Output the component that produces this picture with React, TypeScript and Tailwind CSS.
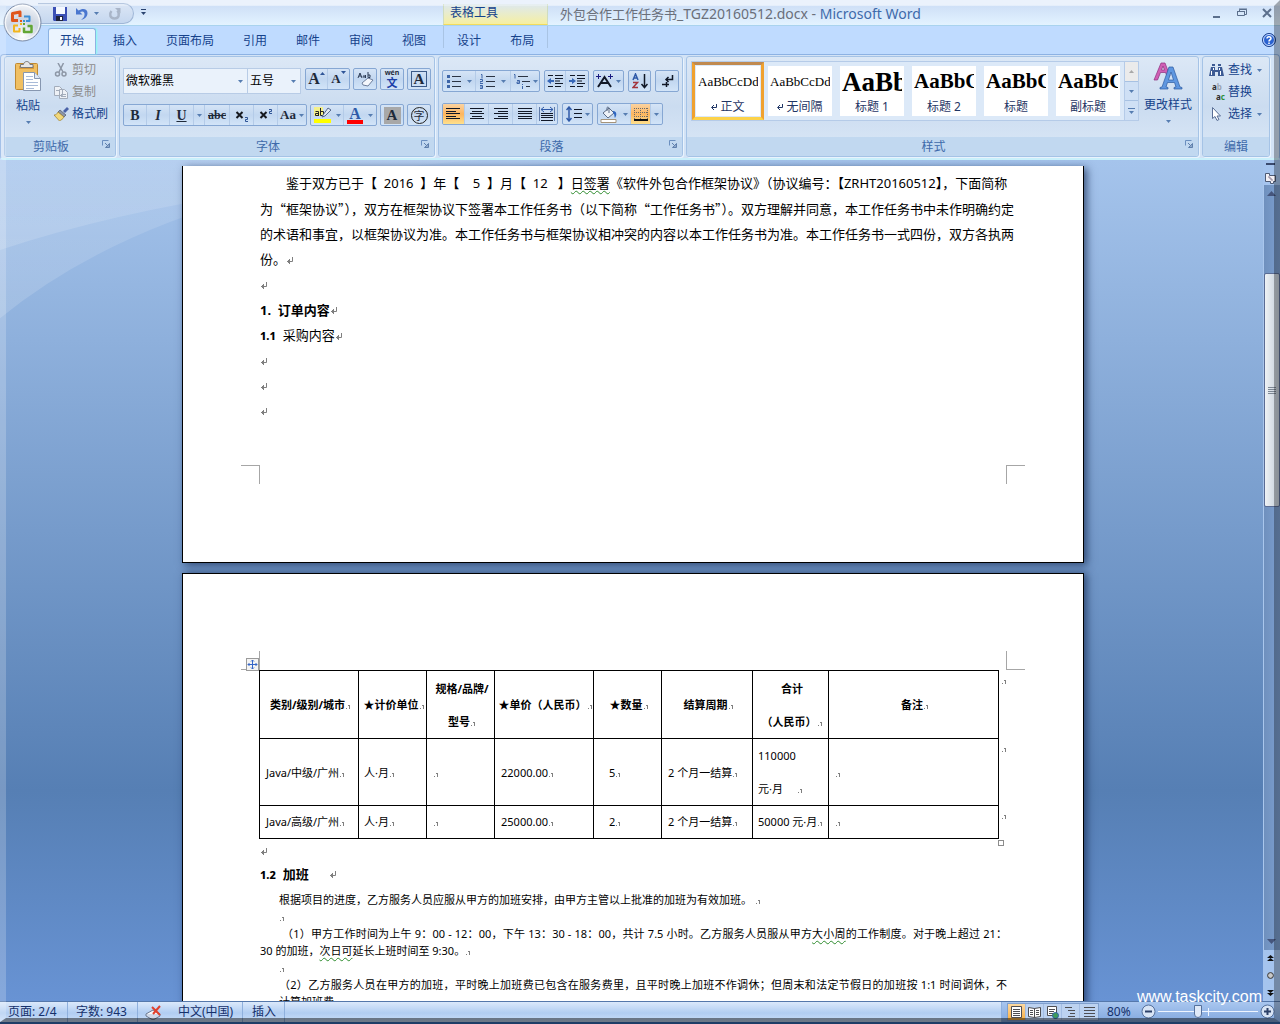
import type { ReactNode } from "react";
import clsx from "clsx";

type Kids = { children?: ReactNode };

const Caret = () => (
  <svg width="5" height="3" viewBox="0 0 5 3" className="shrink-0" aria-hidden="true">
    <path d="M0 0h5L2.500 3z" fill="#567db1" />
  </svg>
);

// paragraph mark used at the end of every body paragraph
const ParaMark = () => (
  <svg width="8" height="8" viewBox="0 0 8 8" className="inline-block" aria-hidden="true">
    <path d="M6.500 0v4.500H1M3.500 2v5M2.500 3v3" fill="none" stroke="#7f7f7f" />
  </svg>
);

// the smaller mark that is shown in table cells and small text
const CellMark = () => (
  <svg width="6" height="5" viewBox="0 0 6 5" className="inline-block align-baseline" aria-hidden="true">
    <path d="M1 4h1v1H1zM3 1h2v4H4V2H3z" fill="#7f7f7f" />
  </svg>
);

const Launcher = ({ label }: { label: string }) => (
  <button aria-label={label} className="absolute right-[4px] top-[3px]">
    <svg width="9" height="9" viewBox="0 0 9 9">
      <path d="M.5 5.500V.5h6" fill="none" stroke="#6b8fbf" />
      <path d="M3 3l3 3M7.500 3.500v4h-4z" fill="#8fa9cc" stroke="#5f80ad" />
    </svg>
  </button>
);

const Group = ({ title, className, launcher = true, children }: Kids & { title: string; className: string; launcher?: boolean }) => (
  <section
    aria-label={title}
    className={clsx(
      "flex h-[101px] flex-col rounded-[3px] border border-[#a5c3e6] bg-gradient-to-b from-[#dce8f6] via-[#cbdcf0] to-[#dbe8f7] shadow-[1px_1px_0_#e9f3fd]",
      className,
    )}
  >
    <div className="min-h-0 flex-1">{children}</div>
    <div className={clsx("relative h-[19px] rounded-b-[2px] bg-[#c1d8f0] text-center leading-[19px] text-[#3e6aaa]", launcher && "pr-[18px]")}>
      {title}
      {launcher && <Launcher label={`${title}选项`} />}
    </div>
  </section>
);

const Bar = ({ children }: Kids) => (
  <div className="flex h-[22px] shrink-0 divide-x divide-[#b4cbe8] overflow-hidden rounded-[2px] border border-[#86a7d3] bg-gradient-to-b from-[#d5e4f6] via-[#c2d7f0] to-[#d2e4f8]">
    {children}
  </div>
);

const Btn = ({ label, className = "w-[22px]", on, children }: Kids & { label: string; className?: string; on?: boolean }) => (
  <button
    aria-label={label}
    className={clsx(
      "flex h-full items-center justify-center gap-[3px] text-[#1f2a3a]",
      on && "bg-gradient-to-b from-[#fbd3a0] via-[#fdb55e] to-[#fee08c]",
      className,
    )}
  >
    {children}
  </button>
);

const Lines = ({ d }: { d: string }) => (
  <svg width="16" height="14" viewBox="0 0 16 14">
    <path d={d} stroke="#111827" fill="none" />
  </svg>
);

const OfficeButton = () => (
  <button aria-label="Office 按钮" className="absolute left-[3px] top-[3px] z-10">
    <svg width="39" height="39" viewBox="0 0 39 39">
      <defs>
        <radialGradient id="orb" cx=".5" cy=".85" r=".9">
          <stop offset="0" stopColor="#fff" />
          <stop offset=".5" stopColor="#ccd5e2" />
          <stop offset=".75" stopColor="#e2e7ef" />
          <stop offset="1" stopColor="#fbfcfe" />
        </radialGradient>
      </defs>
      <circle cx="19.500" cy="19.500" r="18.500" fill="url(#orb)" stroke="#7d8da8" />
      <circle cx="19.500" cy="19.500" r="17" fill="none" stroke="#fff" opacity=".8" />
      <g fill="none" strokeWidth="2.500" strokeLinejoin="round">
        <path d="M15 17.500H9.500v-7l7.500-1.500v5" stroke="#e0561c" strokeWidth="3" />
        <path d="M21 13.500h5.500V18H23" stroke="#3d8fd6" strokeWidth="2" />
        <path d="M15 22.500h-4v6h5.500V25" stroke="#f2b51d" strokeWidth="2" />
        <path d="M21 24.500v4.500h7.500v-6h-4" stroke="#62a635" />
      </g>
      <path d="M17 17h2v2h-2z" fill="#e0561c" />
      <path d="M20 17h2v2h-2z" fill="#3d8fd6" />
      <path d="M17 20h2v2h-2z" fill="#f2b51d" />
      <path d="M20 20h2v2h-2z" fill="#62a635" />
    </svg>
  </button>
);

const TitleBar = () => (
  <div className="flex h-[26px] border-b border-[#a9d3ee] bg-gradient-to-b from-[#e4eefb] from-20% via-[#cfe0f7] via-25% to-[#e3f3ff]">
    <div className="flex w-[443px] shrink-0 pl-[38px] pt-[3px]">
      <div className="flex h-[21px] w-[96px] items-center rounded-r-full border border-l-0 border-[#9fb6d6] bg-gradient-to-b from-[#dbe6f5] to-[#c5d7ef] pl-[15px]">
        <button aria-label="保存">
          <svg width="14" height="14" viewBox="0 0 14 14">
            <path d="M0 0h14v14H1L0 13z" fill="#3b50b5" />
            <path d="M3 0h9v7H3z" fill="#f4f8ff" />
            <path d="M3 9h7v5H3z" fill="#20243c" />
            <path d="M7 10h2v3H7z" fill="#fff" />
          </svg>
        </button>
        <button aria-label="撤消" className="ml-[8px]">
          <svg width="13" height="14" viewBox="0 0 13 14">
            <path d="M1 1v6.500h6.500L5 5c3-1.500 5 0 4.500 3-.2 2-1.500 3.500-3.500 5 4-1 6.500-3.500 6.500-7C12.500 2 8 .5 3.500 3.500z" fill="#4a77cf" />
          </svg>
        </button>
        <button aria-label="撤消列表" className="ml-[6px]"><Caret /></button>
        <button aria-label="恢复" className="ml-[9px]">
          <svg width="13" height="14" viewBox="0 0 13 14">
            <path d="M3.500 4C1 7 2 11.500 6.500 11.500S12 7 9.500 3.500" fill="none" stroke="#a9b5c8" strokeWidth="2.500" />
            <path d="M7 1h5.500v5.500z" fill="#a9b5c8" />
          </svg>
        </button>
      </div>
      <button aria-label="自定义快速访问工具栏" className="ml-[7px] flex h-[18px] flex-col items-center justify-center gap-[2px]">
        <span className="h-px w-[5px] bg-[#2b4470]" />
        <svg width="5" height="3" viewBox="0 0 5 3"><path d="M0 0h5L2.500 3z" fill="#2b4470" /></svg>
      </button>
    </div>
    <div className="mt-1 w-[105px] shrink-0 border-x border-b border-[#cfdcc0] border-b-[#f3dc5c] bg-gradient-to-b from-[#dde8ee] to-[#f6efa0] pl-[6px] leading-[18px] text-[#15428b]">
      表格工具
    </div>
    <h1 className="min-w-0 flex-1 truncate pl-[12px] pt-[2px] text-[13px] leading-[23px] text-[#6a6f7a]">
      外包合作工作任务书<span className="text-[14px]">_TGZ20160512.docx - <span className="text-[#3e6aaa]">Microsoft Word</span></span>
    </h1>
    <div className="flex shrink-0 items-center gap-[15px] pr-[8px] text-[#5b6f8c]">
      <button aria-label="最小化">
        <svg width="10" height="10" viewBox="0 0 10 10"><path d="M1 8h7v2H1z" fill="currentColor" /></svg>
      </button>
      <button aria-label="还原">
        <svg width="10" height="10" viewBox="0 0 10 10" fill="none" stroke="currentColor">
          <path d="M2.500 3V1.500h7v5H8M.5 3.500h7v4h-7zM2 1h8M0 3.500h8" />
        </svg>
      </button>
      <button aria-label="关闭">
        <svg width="10" height="10" viewBox="0 0 10 10"><path d="M1 1l8 8M9 1L1 9" stroke="currentColor" strokeWidth="2" /></svg>
      </button>
    </div>
  </div>
);

const tabs = ["开始", "插入", "页面布局", "引用", "邮件", "审阅", "视图"];

const TabRow = () => (
  <nav className="flex h-[28px] items-start bg-[#bfdbff] pl-[48px] text-[#15428b]">
    <div className="flex gap-[5px]">
      {tabs.map((tab, i) => (
        <button
          key={tab}
          className={clsx(
            "h-[26px]",
            i === 0 ? "mt-[2px] rounded-t-[3px] border-x border-t border-[#8db2e3] bg-[#ebf4fe] px-[11px] pb-[2px] shadow-[1px_0_2px_#8fe]" : "px-[12px] pt-[4px]",
          )}
        >
          {tab}
        </button>
      ))}
    </div>
    <div className="ml-[5px] flex h-[22px] w-[105px] gap-[5px] border-x border-[#a9c4e4] pl-px">
      <button className="h-[26px] px-[12px] pt-[4px]">设计</button>
      <button className="h-[26px] px-[12px] pt-[4px]">布局</button>
    </div>
    <button aria-label="帮助" className="ml-auto mr-[4px] mt-[7px]">
      <svg width="14" height="14" viewBox="0 0 14 14">
        <circle cx="7" cy="7" r="6.500" fill="#2a62d0" stroke="#1d418c" />
        <circle cx="7" cy="7" r="5.500" fill="none" stroke="#cfe0ff" />
        <path d="M5 5.500C5 3 9 3 9 5.500 9 7 7 6.500 7 8.500M7 9.500V11" fill="none" stroke="#fff" strokeWidth="1.500" />
      </svg>
    </button>
  </nav>
);

const ClipboardGroup = () => (
  <Group title="剪贴板" className="w-[112px] shrink-0">
    <div className="flex pl-[9px] pt-[2px] text-[#15428b]">
      <button className="flex w-[28px] flex-col items-center">
        <svg width="28" height="32" viewBox="0 0 28 32" className="mt-px">
          <rect x="1.500" y="3.500" width="22" height="26" rx="1" fill="#f0bf62" stroke="#c08a32" />
          <rect x="5" y="6" width="15" height="3" fill="#d99b3c" />
          <path d="M6.500 7.500V4.500h3c.5-4 6-4 6.500 0h3v3z" fill="#e6e6e6" stroke="#7a7a7a" />
          <path d="M9.500 12.500h11l6 6v12h-17z" fill="#fff" stroke="#8797b0" />
          <path d="M20.500 12.500v6h6" fill="#dfe8f5" stroke="#8797b0" />
          <path d="M12 16.500h7M12 19.500h7M12 22.500h12M12 25.500h12M12 28.500h8" stroke="#a9bbd8" />
        </svg>
        <span className="mt-[5px] leading-[18px]">粘贴</span>
        <span className="mt-[6px]"><Caret /></span>
      </button>
      <div className="ml-[12px] flex flex-col">
        <button className="flex h-[22px] items-center gap-[4px] text-[#8d8d8d]">
          <svg width="14" height="14" viewBox="0 0 14 14" fill="none" stroke="#8d97a6" strokeWidth="1.500">
            <path d="M4 0l5 9M9.500 0L5 9" />
            <circle cx="3.500" cy="11" r="2" />
            <circle cx="10" cy="11" r="2" />
          </svg>
          剪切
        </button>
        <button className="flex h-[22px] items-center gap-[4px] text-[#8d8d8d]">
          <svg width="14" height="14" viewBox="0 0 14 14" fill="#eef1f6" stroke="#a3acba">
            <path d="M.5 1.500h5l3 3v6h-8zM5.500 4.500h5l3 3v6h-8z" />
            <path d="M2 5.500h3M7 9.500h5M7 11.500h5" />
          </svg>
          复制
        </button>
        <button className="flex h-[22px] items-center gap-[3px]">
          <svg width="15" height="14" viewBox="0 0 15 14">
            <path d="M9 4l4-4 2 2-4 4z" fill="#4a62a8" />
            <path d="M6 3l6 5-2 2-6-5z" fill="#8d96a8" stroke="#4b5568" strokeWidth=".7" />
            <path d="M4 5l6 5c-1 2-3 3-4.500 4L0 8c2 0 3-1 4-3z" fill="#f1d77a" stroke="#9a7b2c" strokeWidth=".7" />
          </svg>
          格式刷
        </button>
      </div>
    </div>
  </Group>
);

const Combo = ({ label, value, className }: { label: string; value: string; className: string }) => (
  <div className={clsx("relative h-[26px] shrink-0 border border-[#b8cce6] bg-[#eaf2fb]", className)}>
    <select aria-label={label} className="h-full w-full appearance-none pl-[2px] text-black" defaultValue={value}>
      <option>{value}</option>
    </select>
    <span className="pointer-events-none absolute right-[4px] top-[11px] flex"><Caret /></span>
  </div>
);

const FontGroup = () => (
  <Group title="字体" className="w-[316px] shrink-0">
    <div className="flex flex-col gap-[10px] pl-[3px] pt-[11px]">
      <div className="flex h-[26px] gap-[3px]">
        <div className="mr-px flex">
          <Combo label="字体" value="微软雅黑" className="w-[125px]" />
          <Combo label="字号" value="五号" className="w-[53px] border-l-0" />
        </div>
        <Bar>
          <Btn label="增大字体">
            <span className="flex font-['Liberation_Serif'] text-[16px] font-bold leading-[18px]">A<svg width="5" height="3" viewBox="0 0 5 3" className="mt-[2px]"><path d="M0 3h5L2.500 0z" fill="#2f5597" /></svg></span>
          </Btn>
          <Btn label="缩小字体" className="w-[21px]">
            <span className="flex font-['Liberation_Serif'] text-[13px] font-bold leading-[20px]">A<svg width="5" height="3" viewBox="0 0 5 3" className="mt-[2px]"><path d="M0 0h5L2.500 3z" fill="#2f5597" /></svg></span>
          </Btn>
        </Bar>
        <Bar>
          <Btn label="清除格式">
            <svg width="17" height="16" viewBox="0 0 17 16" fill="none" stroke="#2b3b55">
              <path d="M1 7l2-5 2 5M2 5h2M7 6.500c-1 0-1-2 0-2s1 2 0 2M8.500 4v3M11 1v5.500h2V4h-2" />
              <path d="M5 12l6-5 5 2-5 6-5-1z" fill="#f4f7fc" stroke="#6e7f9c" />
            </svg>
          </Btn>
        </Bar>
        <Bar>
          <Btn label="拼音指南">
            <span className="flex flex-col items-center text-[7px] font-bold leading-[8px]">wén<span className="text-[11px] leading-[12px] text-[#1c3fa8]">文</span></span>
          </Btn>
        </Bar>
        <Bar>
          <Btn label="字符边框">
            <span className="h-[16px] w-[16px] border border-[#3b5a88] text-center font-['Liberation_Serif'] text-[15px] font-bold leading-[15px]">A</span>
          </Btn>
        </Bar>
      </div>
      <div className="flex gap-[3px] font-['Liberation_Serif'] font-bold text-[#16191f]">
        <Bar>
          <Btn label="加粗" className="w-[23px]"><span className="text-[14px]">B</span></Btn>
          <Btn label="倾斜" className="w-[23px]"><span className="text-[14px] italic">I</span></Btn>
          <Btn label="下划线" className="w-[24px]"><span className="text-[14px] underline">U</span></Btn>
          <Btn label="下划线类型" className="w-[11px]"><Caret /></Btn>
          <Btn label="删除线" className="w-[25px]"><span className="text-[12px] line-through">abc</span></Btn>
          <Btn label="下标" className="w-[24px]">
            <svg width="14" height="14" viewBox="0 0 14 14" fill="none">
              <path d="M1.500 4l6 6M7.500 4l-6 6" stroke="#16191f" strokeWidth="2" />
              <path d="M10 9.500h2.500v2H10.500v2H13" stroke="#2f5597" />
            </svg>
          </Btn>
          <Btn label="上标" className="w-[24px]">
            <svg width="14" height="14" viewBox="0 0 14 14" fill="none">
              <path d="M1.500 4l6 6M7.500 4l-6 6" stroke="#16191f" strokeWidth="2" />
              <path d="M10 1.500h2.500v2H10.500v2H13" stroke="#2f5597" />
            </svg>
          </Btn>
          <Btn label="更改大小写" className="w-[28px]"><span className="text-[13px]">Aa</span><Caret /></Btn>
        </Bar>
        <Bar>
          <Btn label="突出显示" className="w-[33px]">
            <svg width="17" height="18" viewBox="0 0 17 18">
              <path d="M0 1h9v9H0z" fill="#f4f08a" />
              <path d="M1.500 5.500h3V10M4.500 7.500h-3V9.500h3M6.500 2v7.500h3v-4h-3" fill="none" stroke="#222" />
              <path d="M9 9l5-7 3 2-6 6-3 1z" fill="#dfe7f4" stroke="#55688c" />
              <path d="M0 13h17v4H0z" fill="#ff0" />
            </svg>
            <span className="ml-[2px] flex"><Caret /></span>
          </Btn>
          <Btn label="字体颜色" className="w-[32px]">
            <span className="flex flex-col items-center">
              <span className="text-[16px] leading-[13px] text-[#2f5aa8]">A</span>
              <span className="h-[4px] w-[16px] bg-[#f00]" />
            </span>
            <span className="ml-[2px] flex"><Caret /></span>
          </Btn>
        </Bar>
        <Bar>
          <Btn label="字符底纹">
            <span className="h-[17px] w-[17px] bg-[#a8a8a8] text-center text-[15px] leading-[16px]">A</span>
          </Btn>
        </Bar>
        <Bar>
          <Btn label="带圈字符">
            <span className="h-[17px] w-[17px] rounded-full border border-[#222] text-center font-['Noto_Sans_CJK_SC'] text-[11px] font-normal leading-[14px]">字</span>
          </Btn>
        </Bar>
      </div>
    </div>
  </Group>
);

const ParagraphGroup = () => (
  <Group title="段落" className="w-[245px] shrink-0">
    <div className="flex flex-col gap-[11px] pl-[3px] pt-[13px]">
      <div className="flex gap-[4px]">
        <Bar>
          <Btn label="项目符号" className="w-[33px]">
            <svg width="14" height="14" viewBox="0 0 14 14">
              <path d="M5 2.500h9M5 7.500h9M5 12.500h9" stroke="#2b3444" />
              <path d="M0 1h3v3H0zM0 6h3v3H0zM0 11h3v3H0z" fill="#3d65a8" />
            </svg>
            <span className="ml-[3px] flex"><Caret /></span>
          </Btn>
          <Btn label="编号" className="w-[35px]">
            <svg width="15" height="15" viewBox="0 0 15 15">
              <path d="M6 2.500h9M6 7.500h9M6 12.500h9" stroke="#2b3444" />
              <path d="M1 .5h1v4M0 5.500h2.500v2H0v2h3M0 11.500h2.500v3H0M0 13h2" fill="none" stroke="#3d65a8" />
            </svg>
            <span className="ml-[3px] flex"><Caret /></span>
          </Btn>
          <Btn label="多级列表" className="w-[28px]">
            <svg width="17" height="15" viewBox="0 0 17 15">
              <path d="M5 2.500h10M9 7.500h8M13 12.500h4" stroke="#2b3444" />
              <path d="M1 .5h1v4M4 6.500h2.500v3H4V8h2M9.500 10v1M9.500 12v3" fill="none" stroke="#3d65a8" />
            </svg>
            <Caret />
          </Btn>
        </Bar>
        <Bar>
          <Btn label="减少缩进量" className="w-[21px]">
            <svg width="16" height="14" viewBox="0 0 16 14">
              <path d="M1 1.500h5M8 1.500h8M8 4.500h8M8 7h5M8 9.500h8M1 12.500h5M8 12.500h6" stroke="#111827" />
              <path d="M0 7l4-3v2h3v2H4v2z" fill="#3566b8" />
            </svg>
          </Btn>
          <Btn label="增加缩进量">
            <svg width="16" height="14" viewBox="0 0 16 14">
              <path d="M1 1.500h5M8 1.500h8M8 4.500h8M8 7h5M8 9.500h8M1 12.500h5M8 12.500h6" stroke="#111827" />
              <path d="M7 7L3 4v2H0v2h3v2z" fill="#3566b8" />
            </svg>
          </Btn>
        </Bar>
        <Bar>
          <Btn label="中文版式" className="w-[29px]">
            <svg width="17" height="14" viewBox="0 0 17 14">
              <path d="M2 13L8.500 3 15 13M5 9h7" fill="none" stroke="#111827" strokeWidth="2" />
              <path d="M0 2.500h5M2.500 0v5M12 2.500h5M14.500 0v5" stroke="#1a1a80" />
            </svg>
            <Caret />
          </Btn>
        </Bar>
        <Bar>
          <Btn label="排序" className="w-[21px]">
            <svg width="16" height="16" viewBox="0 0 16 16" fill="none">
              <path d="M1 7l2.500-6L6 7M2 5h3" stroke="#2f5aa8" strokeWidth="1.500" />
              <path d="M1 9.500h4.500L1 14.500h5" stroke="#a3343c" strokeWidth="1.500" />
              <path d="M12.500 1v13M9.500 11l3 3.500 3-3.500" stroke="#111827" strokeWidth="1.500" />
            </svg>
          </Btn>
        </Bar>
        <Bar>
          <Btn label="显示编辑标记">
            <svg width="13" height="14" viewBox="0 0 13 14" fill="none" stroke="#111827">
              <path d="M11.500 1v4.500H5M7.500 3L5 5.500 7.500 8M1 10.500h7M5.500 8v5" strokeWidth="1.500" />
            </svg>
          </Btn>
        </Bar>
      </div>
      <div className="flex gap-[4px]">
        <Bar>
          <Btn label="左对齐" on><Lines d="M0 1.500h14M0 4.500h10M0 6.500h14M0 9.500h10M0 11.500h14" /></Btn>
          <Btn label="居中" className="w-[24px]"><Lines d="M1 1.500h14M3 4.500h10M1 6.500h14M3 9.500h10M1 11.500h14" /></Btn>
          <Btn label="右对齐" className="w-[24px]"><Lines d="M1 1.500h14M5 4.500h10M1 6.500h14M5 9.500h10M1 11.500h14" /></Btn>
          <Btn label="两端对齐" className="w-[24px]"><Lines d="M1 1.500h14M1 4.500h14M1 6.500h14M1 9.500h14M1 11.500h14" /></Btn>
          <Btn label="分散对齐" className="w-[20px]">
            <svg width="16" height="16" viewBox="0 0 16 16" fill="none">
              <path d="M.5 1v14M15.500 1v14" stroke="#5f7aa8" />
              <path d="M2 3.500h12M5 1L2 3.500 5 6M11 1l3 2.500L11 6" stroke="#2f5aa8" />
              <path d="M2 7.500h12M2 9.500h12M2 11.500h12M2 14.500h12" stroke="#111827" />
            </svg>
          </Btn>
        </Bar>
        <Bar>
          <Btn label="行距" className="w-[29px]">
            <svg width="16" height="16" viewBox="0 0 16 16" fill="none">
              <path d="M3 1v14M.5 4L3 1l2.500 3M.5 12L3 15l2.500-3" stroke="#2f5aa8" strokeWidth="1.500" />
              <path d="M8 3.500h8M8 7.500h8M8 11.500h8" stroke="#111827" />
            </svg>
            <Caret />
          </Btn>
        </Bar>
        <Bar>
          <Btn label="底纹" className="w-[33px]">
            <svg width="18" height="17" viewBox="0 0 18 17">
              <path d="M3 7l6-5 5 5-6 5z" fill="#eef2f8" stroke="#5b6b86" />
              <path d="M7 5V1.500c1-1 2 0 2 1V7" fill="none" stroke="#5b6b86" />
              <path d="M13 5c4 0 4 4 2 7-1-2 0-4-2-5z" fill="#2f66c0" />
              <path d="M1 13.500h15v3H1z" fill="#fff" stroke="#a6947a" />
            </svg>
            <span className="ml-[2px] flex"><Caret /></span>
          </Btn>
          <Btn label="边框" className="w-[20px]" on>
            <svg width="14" height="14" viewBox="0 0 14 14">
              <path d="M0 1.500h14M0 5.500h14M0 9.500h14M.5 1v12M6.500 1v12M13.500 1v12" stroke="#6b6b6b" strokeDasharray="1 1" />
              <path d="M0 13h14" stroke="#111" strokeWidth="2" />
            </svg>
          </Btn>
          <Btn label="边框类型" className="w-[11px]"><Caret /></Btn>
        </Bar>
      </div>
    </div>
  </Group>
);

const styles = [
  { name: "正文", mark: true, sample: "AaBbCcDd", font: "text-[13px]" },
  { name: "无间隔", mark: true, sample: "AaBbCcDd", font: "text-[13px]" },
  { name: "标题 1", mark: false, sample: "AaBb", font: "text-[27px] font-bold" },
  { name: "标题 2", mark: false, sample: "AaBbC", font: "text-[21px] font-bold" },
  { name: "标题", mark: false, sample: "AaBbC", font: "text-[21px] font-bold" },
  { name: "副标题", mark: false, sample: "AaBbC", font: "text-[21px] font-bold" },
];

const StylesGroup = () => (
  <Group title="样式" className="min-w-0 flex-1">
    <div className="flex pl-[4px] pt-[4px]">
      <div className="flex h-[60px] border border-[#b5cbe8] bg-[#dce9f8]">
        {styles.map((s, i) => (
          <button
            key={s.name}
            className={clsx(
              "h-[58px] w-[72px] border-[3px] p-px",
              i === 0 ? "border-[#f0a12f] border-b-[#fcd24a] border-t-[#c08a50]" : "border-transparent",
            )}
          >
            <span className="flex h-full flex-col items-center overflow-hidden bg-white px-[2px] text-[#1f3564]">
              <span className={clsx("flex h-[32px] w-full shrink-0 items-center overflow-hidden whitespace-nowrap font-['Liberation_Serif'] text-black", s.font)}>
                {s.sample}
              </span>
              <span className="flex items-center gap-[3px] leading-[18px]">
                {s.mark && (
                  <svg width="6" height="6" viewBox="0 0 6 6"><path d="M5.500 0v3.500H1M3 1L.5 3.500 3 6" fill="none" stroke="#1f3564" /></svg>
                )}
                {s.name}
              </span>
            </span>
          </button>
        ))}
        <div className="flex w-[14px] flex-col border-l border-[#b5cbe8]">
          <button aria-label="上一行" className="flex flex-1 items-center justify-center bg-[#ebebeb]">
            <svg width="5" height="3" viewBox="0 0 5 3"><path d="M0 3h5L2.500 0z" fill="#a8a8a8" /></svg>
          </button>
          <button aria-label="下一行" className="flex flex-1 items-center justify-center border-y border-[#a7c1e2] bg-[#cfe0f5]"><Caret /></button>
          <button aria-label="其他" className="flex flex-1 flex-col items-center justify-center gap-[2px] bg-[#cfe0f5]">
            <span className="h-px w-[7px] bg-[#567db1]" />
            <Caret />
          </button>
        </div>
      </div>
      <button className="ml-[5px] flex flex-col items-center pt-px text-[#15428b]">
        <svg width="30" height="28" viewBox="0 0 30 28">
          <path d="M1 18L8 1h4l5 13h-3l-1.500-3.500h-5L4.500 18zM8.500 8h3L10 4z" fill="#cf5fb5" stroke="#8e2f7c" strokeWidth=".7" />
          <path d="M7 27v-1.500l2-.5 7-20h4l7 20 2 .5V27h-8v-1.500l2-.5-1.500-4.500h-7L13 25l2 .5V27zM15.500 18h5L18 10z" fill="#5f97e0" stroke="#2c5aa0" strokeWidth=".7" />
        </svg>
        <span className="mt-[6px] leading-[18px]">更改样式</span>
        <span className="mt-[6px]"><Caret /></span>
      </button>
    </div>
  </Group>
);

const EditGroup = () => (
  <Group title="编辑" className="w-[68px] shrink-0" launcher={false}>
    <div className="flex flex-col pl-[6px] pt-[2px] text-[#15428b]">
      <button className="flex h-[22px] items-center gap-[4px]">
        <svg width="15" height="13" viewBox="0 0 15 13">
          <path d="M2 3h4v3h3V3h4l2 9H9V8H6v4H0z" fill="#3c5a94" />
          <path d="M3 0h3v2H3zM9 0h3v2H9z" fill="#3c5a94" />
          <path d="M2.500 7v4M11.500 7v4M4.500 4v2M10.500 4v2" stroke="#fff" />
        </svg>
        <span className="mr-px">查找</span>
        <Caret />
      </button>
      <button className="flex h-[22px] items-center gap-[3px]">
        <span className="flex h-[20px] w-[16px] flex-col text-[8px] font-bold leading-[10px] text-[#2b2b2b]">
          <span>a<span className="text-[#9aa3b0]">b</span></span>
          <span className="self-end">a<span className="text-[#2b8f3a]">c</span></span>
        </span>
        替换
      </button>
      <button className="flex h-[22px] items-center gap-[4px]">
        <svg width="15" height="14" viewBox="0 0 15 14">
          <path d="M3.500 .5v11l2.500-2 2 4 2-1-2-3.500h3.500z" fill="#fff" stroke="#5a6f96" />
        </svg>
        <span className="mr-px">选择</span>
        <Caret />
      </button>
    </div>
  </Group>
);

const CropMarks = ({ top }: { top?: boolean }) => (
  <div className="flex justify-between px-[58px]" aria-hidden="true">
    <div className={clsx("h-[19px] w-[19px] border-r border-[#a6a6a6]", top ? "border-b" : "border-t")} />
    <div className={clsx("h-[19px] w-[19px] border-l border-[#a6a6a6]", top ? "border-b" : "border-t")} />
  </div>
);

// Chinese phrase whose curly quotes keep their full width
const Quoted = ({ children }: Kids) => <span className="font-['Noto_Sans_CJK_SC']">{children}</span>;

const Wavy = ({ children }: Kids) => (
  <span className="underline decoration-[#2e8b2e] decoration-wavy decoration-1 underline-offset-2">{children}</span>
);

const PageOne = () => (
  <article className="w-[902px] shrink-0 border-x border-b border-black bg-white pb-[78px] pt-[5px] shadow-[3px_2px_8px_rgba(20,40,80,0.7)]">
    <div className="whitespace-pre pl-[77px] text-[13px] leading-[25px]">
      <p className="pl-[26px]">
        鉴于双方已于【{"  "}2016{"  "}】年【{"    "}5{"  "}】月【{"  "}12{"   "}】<Wavy>日签署</Wavy>《软件外包合作框架协议》（协议编号：【ZRHT20160512】，下面简称
      </p>
      <p>为<Quoted>“框架协议”），</Quoted>双方在框架协议下签署本工作任务书（以下简称<Quoted>“工作任务书”）。</Quoted>双方理解并同意，本工作任务书中未作明确约定</p>
      <p>的术语和事宜，以框架协议为准。本工作任务书与框架协议相冲突的内容以本工作任务书为准。本工作任务书一式四份，双方各执两</p>
      <p>份。<ParaMark /></p>
      <p className="h-[26px]"><ParaMark /></p>
      <h2 className="font-bold">1.{"  "}订单内容<ParaMark /></h2>
      <h3><span className="text-[11px] font-extrabold">1.1</span>{"  "}采购内容<ParaMark /></h3>
      <p><ParaMark /></p>
      <p><ParaMark /></p>
      <p><ParaMark /></p>
    </div>
    <div className="pt-[42px]"><CropMarks /></div>
  </article>
);

const rows = [
  { h: "h-[67px] leading-[33px]", cells: ["Java/中级/广州", "人·月", "", "22000.00", "5", "2 个月一结算", "110000\n元·月     ", ""] },
  { h: "h-[33px] leading-[32px]", cells: ["Java/高级/广州", "人·月", "", "25000.00", "2", "2 个月一结算", "50000 元·月", ""] },
];

const heads = ["类别/级别/城市", "★计价单位", "规格/品牌/\n型号", "★单价（人民币）", "★数量", "结算周期", "合计\n（人民币）", "备注"];

const OrderTable = () => (
  <div className="flex pl-[76px]">
    <table className="w-[740px] table-fixed border-collapse whitespace-pre text-[11px]">
      <colgroup>
        <col className="w-[99px]" />
        <col className="w-[68px]" />
        <col className="w-[68px]" />
        <col className="w-[99px]" />
        <col className="w-[68px]" />
        <col className="w-[91px]" />
        <col className="w-[76px]" />
        <col className="w-[170px]" />
      </colgroup>
      <thead>
        <tr className="h-[68px] leading-[33px]">
          {heads.map((h) => (
            <th key={h} className="border border-black py-0 pl-[3px] pr-0 text-center font-bold">{h}<CellMark /></th>
          ))}
        </tr>
      </thead>
      <tbody>
        {rows.map((r) => (
          <tr key={r.h} className={r.h}>
            {r.cells.map((c, i) => (
              <td key={i} className={clsx("border border-black py-0 pr-0", i === 4 ? "pl-[15px]" : i === 1 || i === 6 ? "pl-[5px]" : "pl-[6px]")}>
                {c}<CellMark />
              </td>
            ))}
          </tr>
        ))}
      </tbody>
    </table>
    <div className="flex w-[10px] flex-col pl-[2px] leading-none" aria-hidden="true">
      <span className="h-[68px] pt-[4px]"><CellMark /></span>
      <span className="h-[67px] pt-[4px]"><CellMark /></span>
      <span className="h-[33px] pt-[4px]"><CellMark /></span>
    </div>
    <span className="absolute left-[815px] top-[266px] h-[6px] w-[6px] border border-[#8c8c8c]" />
  </div>
);

const PageTwo = () => (
  <article className="relative w-[902px] shrink-0 border border-black bg-white pt-[77px] shadow-[3px_0_8px_rgba(20,40,80,0.7)]">
    <CropMarks top />
    <button aria-label="移动表格" className="absolute left-[63px] top-[84px] h-[13px] w-[13px] border border-[#9a9a9a] bg-[#f4f4f4]">
      <svg width="11" height="11" viewBox="0 0 11 11">
        <path d="M1 5.500h9M5.500 1v9M4 2.500L5.500 1 7 2.500M4 8.500L5.500 10 7 8.500M2.500 4L1 5.500 2.500 7M8.500 4L10 5.500 8.500 7" fill="none" stroke="#3566c8" />
      </svg>
    </button>
    <OrderTable />
    <div className="whitespace-pre-wrap pl-[77px] pr-[76px] text-[11px] leading-[17px]">
      <p className="leading-[24px]"><ParaMark /></p>
      <h3 className="mb-[5px] text-[13px] font-bold leading-[22px]">
        <span className="text-[11px] font-extrabold">1.2</span>{"  "}加班{"      "}<ParaMark />
      </h3>
      <p className="pl-[19px]">根据项目的进度，乙方服务人员应服从甲方的加班安排，由甲方主管以上批准的加班为有效加班。 <CellMark /></p>
      <p className="pl-[19px]"><CellMark /></p>
      <p className="pl-[22px] [text-align-last:justify]">（1）甲方工作时间为上午 9：00 - 12：00，下午 13：30 - 18：00，共计 7.5 小时。乙方服务人员服从甲方<Wavy>大小周</Wavy>的工作制度。对于晚上超过 21：</p>
      <p>30 的加班，<Wavy>次日可</Wavy>延长上班时间至 9:30。<CellMark /></p>
      <p className="pl-[19px]"><CellMark /></p>
      <p className="pl-[19px] [text-align-last:justify]">（2）乙方服务人员在甲方的加班，平时晚上加班费已包含在服务费里，且平时晚上加班不作调休；但周末和法定节假日的加班按 1:1 时间调休，不</p>
      <p className="pl-[19px]">计算加班费。</p>
    </div>
  </article>
);

const ScrollRail = () => (
  <div className="flex w-[17px] shrink-0 flex-col bg-[#a5c4ee] pt-[3px]">
    <div className="ml-[3px] h-[2px] w-[9px] bg-[#3a4a6e]" />
    <button aria-label="标尺" className="ml-px mt-[5px] h-[15px]">
      <svg width="13" height="12" viewBox="0 0 13 12">
        <path d="M1.500 1.500h4v2h6v6h-2v2h-3v-2h-5z" fill="#f3f0f5" stroke="#4d5a74" />
        <path d="M4 5h2v2h2v2" fill="none" stroke="#8a7f92" />
      </svg>
    </button>
    <div className="flex min-h-0 flex-1 flex-col border-l border-[#a9c6ec] bg-gradient-to-r from-[#6f90bd] to-[#7c9fd0]">
      <button aria-label="向上滚动" className="flex h-[16px] items-center pl-[3px]">
        <svg width="9" height="5" viewBox="0 0 9 5"><path d="M0 5h9L4.500 0z" fill="#45557c" /></svg>
      </button>
      <div className="h-[72px] shrink-0" />
      <div className="flex h-[234px] shrink-0 flex-col items-center justify-center gap-[1px] rounded-[2px] border border-[#5a6c94] bg-gradient-to-r from-[#eef2f5] to-[#c3ced9]">
        {[0, 1, 2, 3].map((n) => (
          <span key={n} className="h-px w-[8px] bg-[#7c8794]" />
        ))}
      </div>
      <div className="flex-1" />
      <button aria-label="向下滚动" className="flex h-[18px] items-center pl-[3px]">
        <svg width="9" height="5" viewBox="0 0 9 5"><path d="M0 0h9L4.500 5z" fill="#45557c" /></svg>
      </button>
    </div>
    <div className="flex h-[51px] flex-col justify-around pl-[4px]">
      <button aria-label="前一页"><svg width="7" height="7" viewBox="0 0 7 7"><path d="M3.500 0L7 3H0zM3.500 3L7 6H0z" fill="#111" /></svg></button>
      <button aria-label="选择浏览对象"><svg width="7" height="7" viewBox="0 0 7 7"><circle cx="3.500" cy="3.500" r="2.900" fill="#c8c8c8" stroke="#333" /></svg></button>
      <button aria-label="下一页"><svg width="7" height="7" viewBox="0 0 7 7"><path d="M3.500 4L7 1H0zM3.500 7L7 4H0z" fill="#111" /></svg></button>
    </div>
  </div>
);

const views = [
  { name: "页面视图", d: "M1.500 .5h10v11h-10zM3 3.500h7M3 5.500h7M3 7.500h7M3 9.500h7" },
  { name: "阅读版式视图", d: "M.5 1.500l6 1v9l-6-1zM12.500 1.500l-6 1v9l6-1zM2 4.500h3M2 6.500h3M2 8.500h3M8 4.500h3M8 6.500h3M8 8.500h3" },
  { name: "Web 版式视图", d: "M1.500 .5h9v9h-9zM3 3.500h6M3 5.500h5M3 7.500h4" },
  { name: "大纲视图", d: "M1 1.500h7M4 4.500h7M6 7.500h5M4 10.500h7" },
  { name: "普通视图", d: "M1 1.500h11M1 4.500h11M1 7.500h11M1 10.500h11" },
];

const StatusBar = () => (
  <footer className="flex h-[23px] shrink-0 items-start border-t border-[#5578ab] bg-gradient-to-b from-[#dbe9fb] via-[#b1cdf2] via-50% to-[#cfe2fa] text-[#15306b]">
    <div className="flex leading-[20px]">
      <button className="w-[68px] border-r border-[#8fb0dd] pl-[8px] text-left">页面: 2/4</button>
      <button className="w-[70px] border-r border-[#8fb0dd] pl-[8px] text-left">字数: 943</button>
      <button aria-label="校对" className="w-[31px] pl-[7px]">
        <svg width="18" height="15" viewBox="0 0 18 15">
          <path d="M1 9l7-4 7 4-7 5z" fill="#f6f8fc" stroke="#6b7890" />
          <path d="M1 9v2l7 4 7-4V9" fill="#cfd8e8" stroke="#6b7890" />
          <path d="M7 2l8 8M15 1L8 9" stroke="#e0402c" strokeWidth="2" />
        </svg>
      </button>
      <button className="w-[74px] border-r border-[#8fb0dd] pl-[9px] text-left">中文(中国)</button>
      <button className="w-[42px] border-r border-[#8fb0dd] pl-[9px] text-left">插入</button>
    </div>
    <div className="ml-auto flex h-full items-start border-l border-[#8fb0dd] bg-gradient-to-b from-[#a9c6ef] to-[#7ea5dd] pl-[5px] pr-[5px]">
      <div className="mt-px flex h-[18px] divide-x divide-[#a3bde3] border border-[#7f9fcd] bg-[#bcd2f0]">
        {views.map((v, i) => (
          <button
            key={v.name}
            aria-label={v.name}
            className={clsx("flex w-[18px] items-center justify-center", i === 0 && "bg-gradient-to-b from-[#fcd9a0] to-[#fbb03b]")}
          >
            <svg width="13" height="13" viewBox="0 0 13 13">
              <path d={v.d} fill={i < 3 ? "#fff" : "none"} stroke="#4e4e52" />
              {i === 2 && <circle cx="9.500" cy="9.500" r="3" fill="#3f9a5a" stroke="#2b62a8" />}
            </svg>
          </button>
        ))}
      </div>
      <button className="ml-[8px] w-[34px] text-left leading-[20px]">80%</button>
      <button aria-label="缩小" className="mt-[2px]">
        <svg width="15" height="15" viewBox="0 0 15 15">
          <circle cx="7.500" cy="7.500" r="6.500" fill="#d8e4f5" stroke="#56719c" />
          <path d="M4 7.500h7" stroke="#2c4068" strokeWidth="2" />
        </svg>
      </button>
      <div className="relative mx-[2px] mt-[3px] flex h-[13px] w-[100px] items-center bg-[linear-gradient(#eef5ff,#eef5ff)] bg-[length:100%_1px] bg-center bg-no-repeat">
        <span className="absolute left-1/2 h-[8px] w-px bg-[#eef5ff]" />
        <input
          type="range"
          aria-label="显示比例"
          min={0}
          max={100}
          defaultValue={39}
          className="relative h-[13px] w-full appearance-none bg-transparent [&::-webkit-slider-thumb]:h-[13px] [&::-webkit-slider-thumb]:w-[8px] [&::-webkit-slider-thumb]:appearance-none [&::-webkit-slider-thumb]:rounded-b-[4px] [&::-webkit-slider-thumb]:border [&::-webkit-slider-thumb]:border-[#56719c] [&::-webkit-slider-thumb]:bg-[#dfe9f8]"
        />
      </div>
      <button aria-label="放大" className="mt-[2px]">
        <svg width="15" height="15" viewBox="0 0 15 15">
          <circle cx="7.500" cy="7.500" r="6.500" fill="#d8e4f5" stroke="#56719c" />
          <path d="M4 7.500h7M7.500 4v7" stroke="#2c4068" strokeWidth="2" />
        </svg>
      </button>
    </div>
  </footer>
);

const Backdrop = () => (
  <svg className="absolute inset-0 h-full w-full" viewBox="0 0 1280 840" preserveAspectRatio="none" aria-hidden="true">
    <defs>
      <linearGradient id="sweep" x1="0" y1="0" x2="0" y2="1">
        <stop offset="0" stopColor="#fff" stopOpacity=".1" />
        <stop offset="1" stopColor="#fff" stopOpacity=".15" />
      </linearGradient>
    </defs>
    <path d="M0 0h480Q170 20 0 158z" fill="url(#sweep)" />
    <path d="M0 0h860Q300 -10 0 90z" fill="url(#sweep)" />
  </svg>
);

const App = () => (
  <div className="relative flex h-screen flex-col overflow-hidden bg-[#bfdbff] font-['Noto_Sans','Noto_Sans_CJK_SC',sans-serif] text-[12px] text-black" lang="zh-CN">
    <header className="relative shrink-0">
      <OfficeButton />
      <TitleBar />
      <TabRow />
      <div className="flex h-[106px] gap-[3px] rounded-[4px] border border-b-2 border-[#8db2e3] border-b-[#c9f0fb] bg-[#d3e3f6] pl-[3px] pr-[9px] pt-px">
        <ClipboardGroup />
        <FontGroup />
        <ParagraphGroup />
        <StylesGroup />
        <EditGroup />
      </div>
    </header>
    <main className="relative flex min-h-0 flex-1 bg-gradient-to-b from-[#a5c4ec] via-[#567fb4] via-75% to-[#6893d4]">
      <Backdrop />
      <div className="relative flex min-w-0 flex-1 flex-col items-center gap-[10px] overflow-hidden pl-[3px] pt-[6px]">
        <PageOne />
        <PageTwo />
      </div>
      <div className="relative flex"><ScrollRail /></div>
      <div className="absolute bottom-[-6px] right-[18px] font-['Liberation_Sans'] text-[16px] leading-[20px] text-white">www.taskcity.com</div>
    </main>
    <StatusBar />
    <div className="pointer-events-none absolute inset-0 z-20 border-b-2 border-[#1f3d66]">
      <div className="h-full border-[6px] border-b-4 border-b-black/45 border-l-white/20 border-r-black/30 border-t-white/25" />
    </div>
  </div>
);

export default App;
